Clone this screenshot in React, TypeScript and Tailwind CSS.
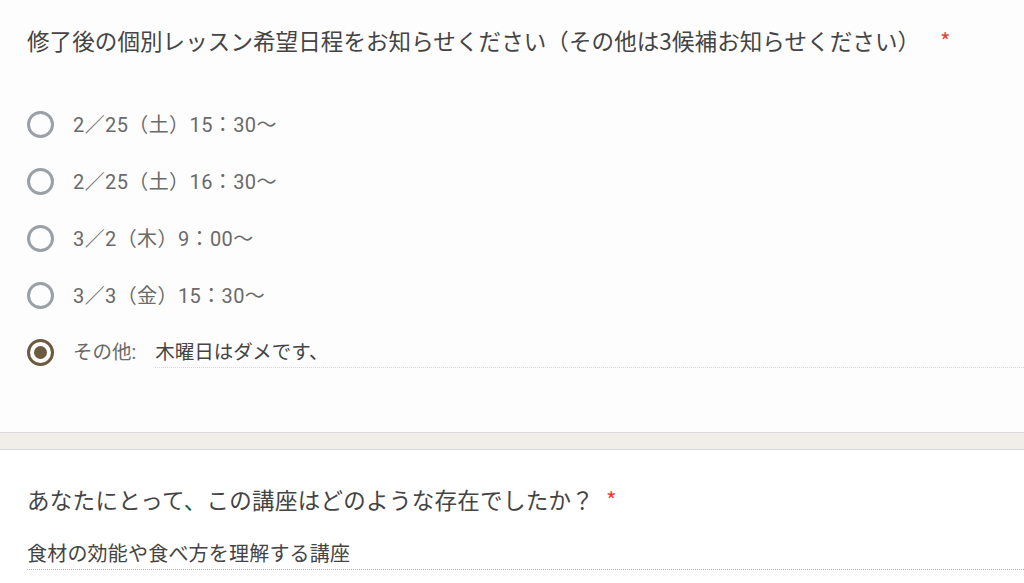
import React from "react";

const options = [
  "2／25（土）15：30～",
  "2／25（土）16：30～",
  "3／2（木）9：00～",
  "3／3（金）15：30～",
];

function Radio({ checked }: { checked?: boolean }) {
  return checked ? (
    <div className="w-[27px] h-[27px] rounded-full border-[3px] border-[#6b5b3f] flex items-center justify-center shrink-0">
      <div className="w-[13px] h-[13px] rounded-full bg-[#6b5b3f]" />
    </div>
  ) : (
    <div className="w-[27px] h-[27px] rounded-full border-[3px] border-[#9aa0a6] shrink-0" />
  );
}

export default function App() {
  return (
    <div
      className="w-[1024px] h-[583px] overflow-hidden bg-white"
      style={{ fontFamily: 'Roboto, "Noto Sans CJK JP", sans-serif' }}
    >
      <div className="h-[433px] bg-[#fdfdfd] border-b border-[#d9d9dd] flex flex-col pl-[27px]">
        <div className="pt-[25px] h-[55px] flex items-center text-[22.5px] leading-[30px] text-[#444444] tracking-[0.1px]" style={{ fontFamily: '"Noto Sans CJK JP", sans-serif' }}>
          <span>修了後の個別レッスン希望日程をお知らせください（その他は3候補お知らせください）</span>
          <span className="ml-[20px] text-[#e0443a]">*</span>
        </div>
        <div className="mt-[41px] flex flex-col">
          {options.map((o) => (
            <div key={o} className="h-[57px] flex items-center gap-[19px]">
              <Radio />
              <span className="text-[20px] text-[#6a6a6a] tracking-[0.4px]">{o}</span>
            </div>
          ))}
          <div className="h-[57px] flex items-center">
            <Radio checked />
            <span className="ml-[19px] text-[19.5px] text-[#6a6a6a]">その他:</span>
            <div className="ml-[19px] flex-1 h-[29px] mt-[1px] border-b border-dotted border-[#d6d6d6] text-[19.5px] leading-[27px] text-[#444444]">
              木曜日はダメです、
            </div>
          </div>
        </div>
      </div>
      <div className="h-[17px] bg-[#f1eee9] border-b border-[#d9d9dd]" />
      <div className="bg-white pl-[27px] pt-[34px] flex flex-col">
        <div className="h-[30px] flex items-center text-[22.5px] leading-[30px] text-[#444444] tracking-[0.3px]" style={{ fontFamily: '"Noto Sans CJK JP", sans-serif' }}>
          <span>あなたにとって、この講座はどのような存在でしたか？</span>
          <span className="ml-[12px] text-[#e0443a]">*</span>
        </div>
        <div className="mt-[25px] h-[31px] border-b border-dotted border-[#aaaaaa] text-[20px] leading-[28px] text-[#444444] tracking-[0.2px]" style={{ fontFamily: '"Noto Sans CJK JP", sans-serif' }}>
          食材の効能や食べ方を理解する講座
        </div>
      </div>
    </div>
  );
}
